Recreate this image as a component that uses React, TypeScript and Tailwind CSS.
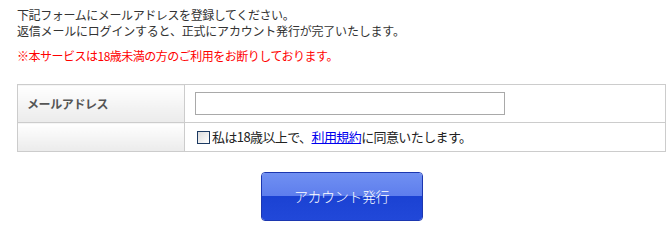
import React from "react";

export default function App() {
  return (
    <div className="w-[672px] h-[240px] bg-white pl-[17px] pt-[7px] font-['Noto_Sans_CJK_JP','Noto_Sans',sans-serif] text-[12px] text-[#333] tracking-[-0.4px]">
      <p className="leading-[16px]">下記フォームにメールアドレスを登録してください。</p>
      <p className="leading-[16px] tracking-[-0.2px]">返信メールにログインすると、正式にアカウント発行が完了いたします。</p>
      <p className="mt-[9px] leading-[16px] text-[#ff0000] tracking-[-0.5px]">※本サービスは18歳未満の方のご利用をお断りしております。</p>

      <table className="mt-[20px] w-[649px] border-collapse border border-[#cccccc]">
        <tbody>
          <tr className="h-[38px]">
            <th className="w-[167px] border border-[#cccccc] bg-gradient-to-b from-white to-[#ebebeb] pl-[9px] text-left font-bold text-[#555]">
              メールアドレス
            </th>
            <td className="border border-[#cccccc] pl-[10px]">
              <div className="h-[23px] w-[310px] border border-[#a9a9a9] bg-white" />
            </td>
          </tr>
          <tr className="h-[29px]">
            <th className="border border-[#cccccc] bg-gradient-to-b from-white to-[#ebebeb]" />
            <td className="border border-[#cccccc] pl-[12px]">
              <label className="flex items-center gap-[2px] text-[13px] tracking-[-0.6px] text-[#222]">
                <span className="h-[13px] w-[13px] border border-[#1c3a62] bg-gradient-to-br from-[#dcdcdc] to-white" />
                <span>
                  私は18歳以上で、
                  <a href="#" className="text-[#0000ee] underline">利用規約</a>
                  に同意いたします。
                </span>
              </label>
            </td>
          </tr>
        </tbody>
      </table>

      <div className="flex w-[649px] justify-center pt-[20px]">
        <button className="flex h-[49px] w-[162px] flex-col overflow-hidden rounded-[4px] border border-[#1c37b0] text-[14px] font-light text-white">
          <span className="flex h-full w-full items-center justify-center bg-[linear-gradient(to_bottom,#7090f2_0%,#5e7eed_48%,#1b42d3_50%,#2148d9_100%)]">
            アカウント発行
          </span>
        </button>
      </div>
    </div>
  );
}
